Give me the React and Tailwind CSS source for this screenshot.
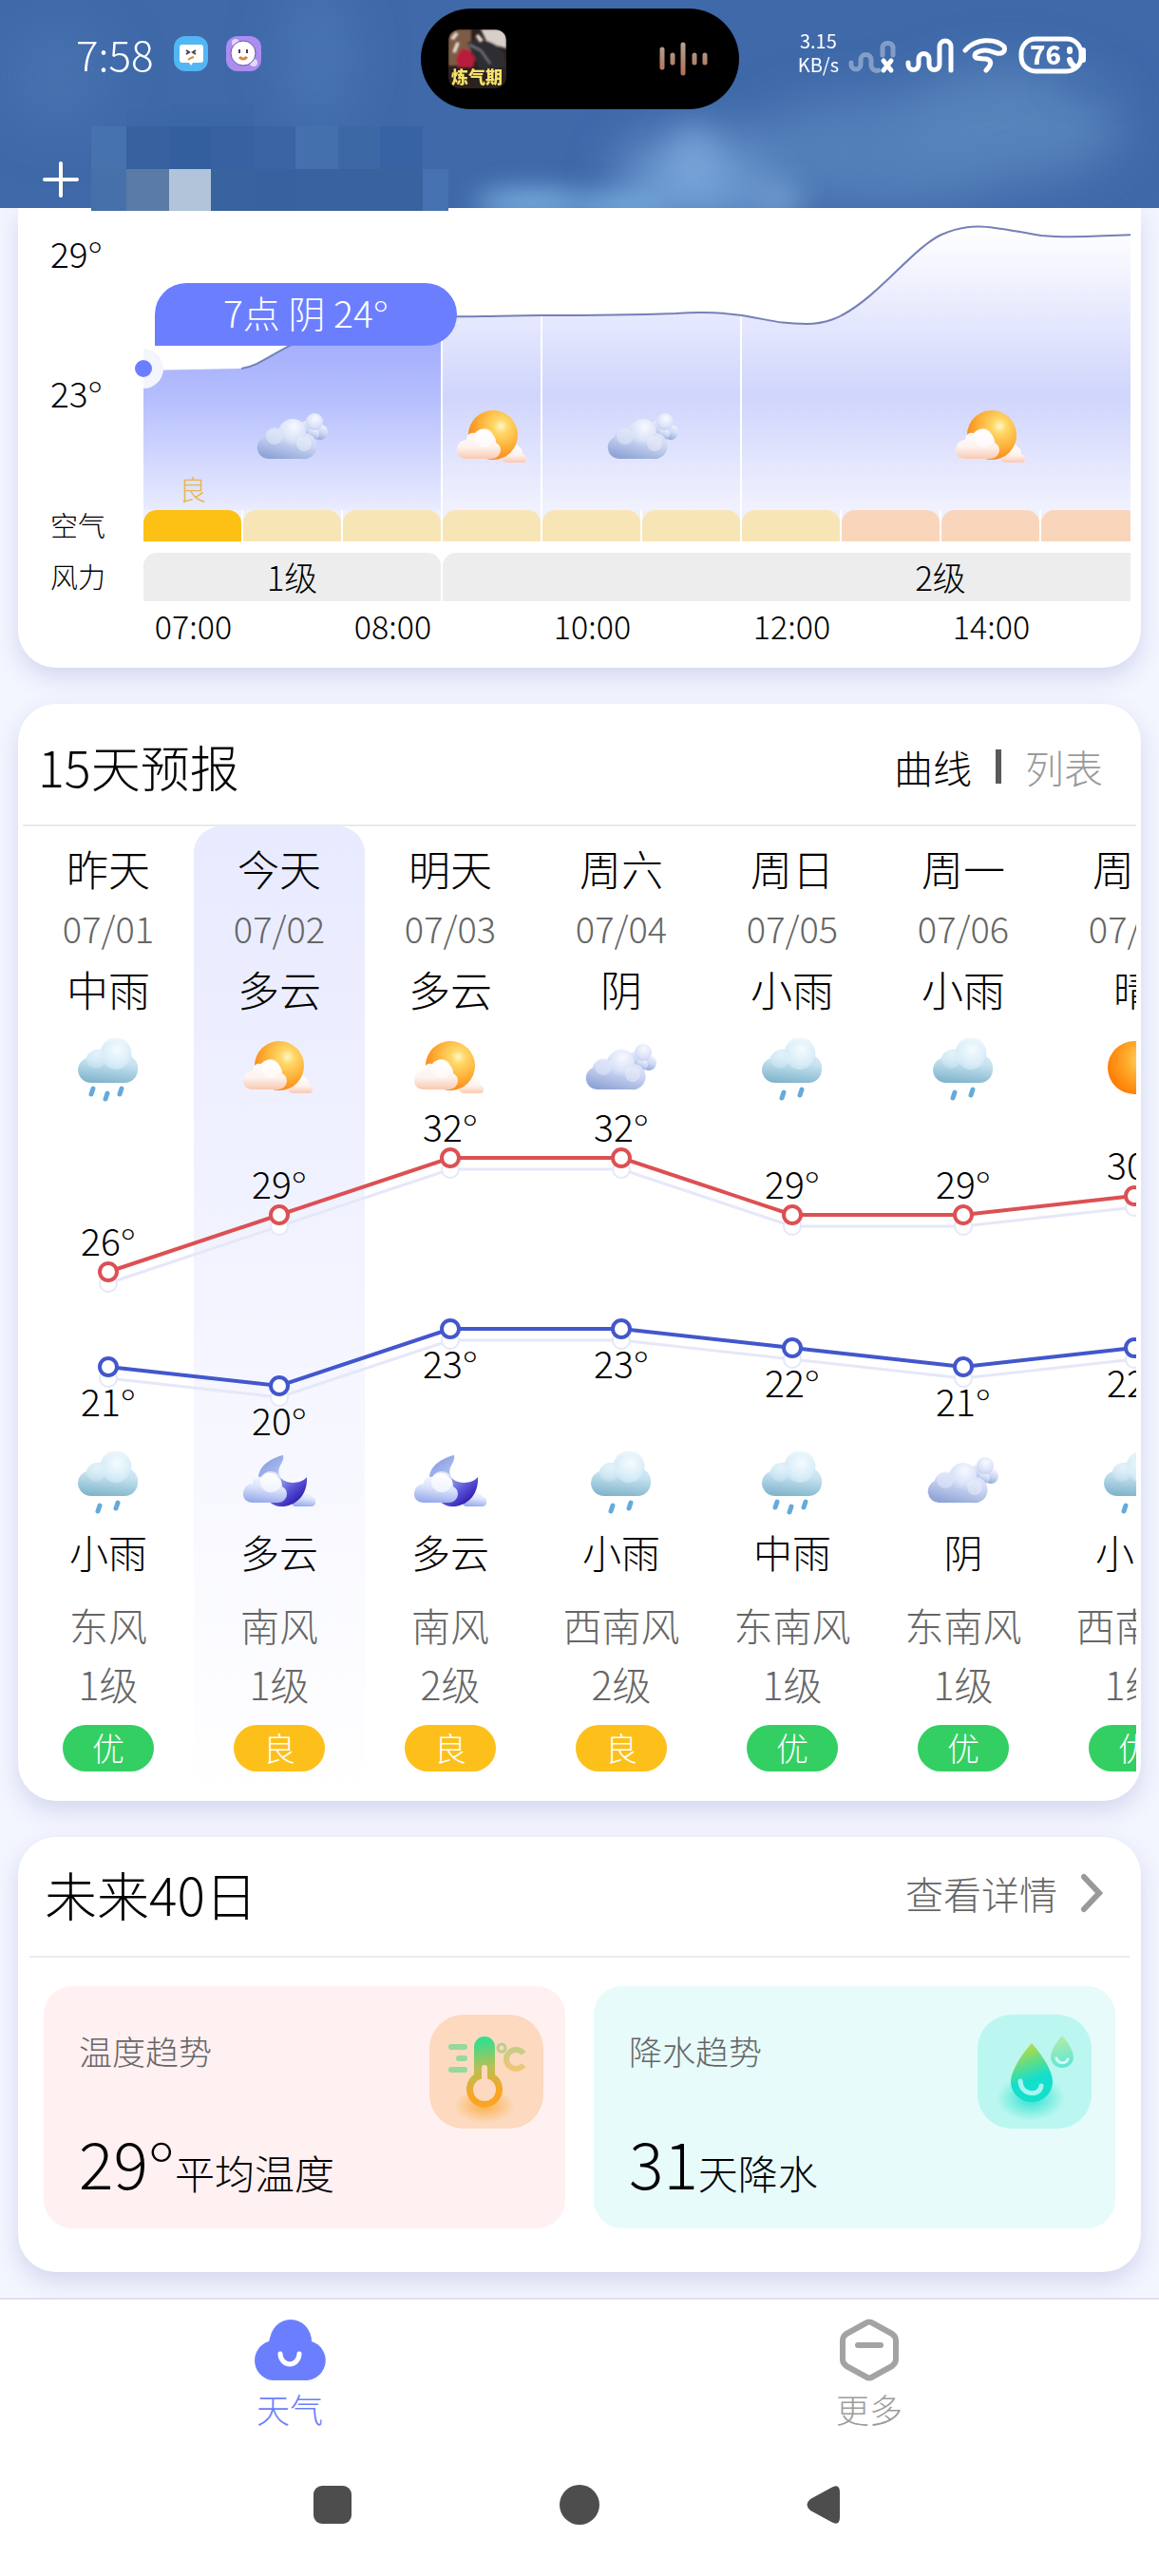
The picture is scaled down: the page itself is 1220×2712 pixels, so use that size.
import React, { useState } from "react";

const FONT = "font-['Noto_Sans_CJK_SC','Noto_Sans',sans-serif]";

/* --------------------------------------
      DATA
-------------------------------------- */
const HOURS = ["07:00", "", "08:00", "", "10:00", "", "12:00", "", "14:00", ""];
const AIR = ["good", "good", "good", "good", "good", "good", "good", "light", "light", "light"];

const DAYS = [
  { day: "昨天", date: "07/01", text: "中雨", icon: "rain3", high: 26, low: 21, nightIcon: "rain2", night: "小雨", wind: "东风", level: "1级", air: "优" },
  { day: "今天", date: "07/02", text: "多云", icon: "cloudy", high: 29, low: 20, nightIcon: "moon", night: "多云", wind: "南风", level: "1级", air: "良" },
  { day: "明天", date: "07/03", text: "多云", icon: "cloudy", high: 32, low: 23, nightIcon: "moon", night: "多云", wind: "南风", level: "2级", air: "良" },
  { day: "周六", date: "07/04", text: "阴", icon: "overcast", high: 32, low: 23, nightIcon: "rain2", night: "小雨", wind: "西南风", level: "2级", air: "良" },
  { day: "周日", date: "07/05", text: "小雨", icon: "rain2", high: 29, low: 22, nightIcon: "rain3", night: "中雨", wind: "东南风", level: "1级", air: "优" },
  { day: "周一", date: "07/06", text: "小雨", icon: "rain2", high: 29, low: 21, nightIcon: "overcast", night: "阴", wind: "东南风", level: "1级", air: "优" },
  { day: "周二", date: "07/07", text: "晴", icon: "sun", high: 30, low: 22, nightIcon: "rain2", night: "小雨", wind: "西南风", level: "1级", air: "优" },
];

/* --------------------------------------
      WEATHER ICONS
-------------------------------------- */
const IconDefs = () => (
  <svg width="0" height="0" className="absolute" aria-hidden="true">
    <defs>
      <radialGradient id="sunFill" cx="0.66" cy="0.32" r="0.75">
        <stop offset="0" stopColor="#fff6c8" />
        <stop offset="0.2" stopColor="#ffd766" />
        <stop offset="0.6" stopColor="#fdae35" />
        <stop offset="1" stopColor="#fb7d12" />
      </radialGradient>
      <radialGradient id="clearFill" cx="0.7" cy="0.35" r="0.75">
        <stop offset="0" stopColor="#ffe07a" />
        <stop offset="0.45" stopColor="#ffad2e" />
        <stop offset="1" stopColor="#ff7a00" />
      </radialGradient>
      <linearGradient id="warmCloud" x1="0" y1="0" x2="0" y2="1">
        <stop offset="0" stopColor="#ffffff" />
        <stop offset="0.6" stopColor="#fdf2ee" />
        <stop offset="1" stopColor="#f9c9b0" />
      </linearGradient>
      <linearGradient id="greyCloud" x1="0.7" y1="0" x2="0.3" y2="1">
        <stop offset="0" stopColor="#f4f6ff" />
        <stop offset="0.5" stopColor="#ccd6f3" />
        <stop offset="1" stopColor="#8ea4d6" />
      </linearGradient>
      <radialGradient id="greyPuff" cx="0.55" cy="0.3" r="0.7">
        <stop offset="0" stopColor="#f7f9ff" />
        <stop offset="0.7" stopColor="#dbe3f8" />
        <stop offset="1" stopColor="#c2cfee" />
      </radialGradient>
      <linearGradient id="rainCloud" x1="0.6" y1="0" x2="0.45" y2="1">
        <stop offset="0" stopColor="#eef8fd" />
        <stop offset="0.55" stopColor="#c6e2f0" />
        <stop offset="1" stopColor="#82b6cd" />
      </linearGradient>
      <radialGradient id="rainPuff" cx="0.55" cy="0.3" r="0.75">
        <stop offset="0" stopColor="#f4fbff" />
        <stop offset="0.7" stopColor="#d8edf7" />
        <stop offset="1" stopColor="#c4e0ee" />
      </radialGradient>
      <linearGradient id="moonFill" x1="18" y1="14" x2="52" y2="56" gradientUnits="userSpaceOnUse">
        <stop offset="0" stopColor="#8f9fe2" />
        <stop offset="0.35" stopColor="#a9bff2" />
        <stop offset="0.75" stopColor="#5a52d6" />
        <stop offset="1" stopColor="#3222b4" />
      </linearGradient>
      <linearGradient id="nightCloud" x1="0.6" y1="0" x2="0.4" y2="1">
        <stop offset="0" stopColor="#ffffff" />
        <stop offset="0.5" stopColor="#dbe3fc" />
        <stop offset="1" stopColor="#98aaea" />
      </linearGradient>
    </defs>
  </svg>
);

const SmallCloud = ({ fill }) => (
  <path
    d="M9 54 a9 9 0 0 1 -9 -10 a10 10 0 0 1 10 -10 a7 7 0 0 1 9 -7 a11 11 0 0 1 18 1 a11 11 0 0 1 4 9 a9 9 0 0 1 5 8 a9 9 0 0 1 -9 9 z"
    fill={fill}
  />
);

const RainCloud = ({ drops }) => (
  <g>
    <path
      d="M20 47 a14 14 0 0 1 -14 -14 a13 13 0 0 1 9 -12 a13 12 0 0 1 15 -9 a16 16 0 0 1 32 7 a15 15 0 0 1 7 14 a14 14 0 0 1 -14 14 z"
      fill="url(#rainCloud)"
    />
    <circle cx="46" cy="18" r="15" fill="url(#rainPuff)" />
    <circle cx="25" cy="22" r="10" fill="url(#rainPuff)" opacity="0.5" />
    {drops.map(([x, y]) => (
      <path
        key={x}
        d={`M${x + 2} ${y} L${x} ${y + 6}`}
        stroke="#66aadb"
        strokeWidth="5"
        strokeLinecap="round"
      />
    ))}
  </g>
);

const WeatherIcon = ({ name, ...rest }) => (
  <svg width="76" height="68" viewBox="0 0 76 68" fill="none" aria-hidden="true" {...rest}>
    {name === "cloudy" && (
      <g>
        <path d="M52 58 a7 7 0 0 1 -2 -13 a9 9 0 0 1 16 -3 a7 7 0 0 1 3 7 a5 5 0 0 1 2 9 z" fill="url(#warmCloud)" />
        <circle cx="38" cy="29" r="26" fill="url(#sunFill)" />
        <SmallCloud fill="url(#warmCloud)" />
        <circle cx="29" cy="32" r="10" fill="#ffffff" opacity="0.55" />
      </g>
    )}
    {name === "overcast" && (
      <g>
        <circle cx="53" cy="23" r="9" fill="url(#greyCloud)" />
        <circle cx="67" cy="26" r="8" fill="url(#greyCloud)" />
        <circle cx="60" cy="28" r="6" fill="url(#greyCloud)" />
        <circle cx="61" cy="15" r="9" fill="url(#greyPuff)" />
        <path d="M12 54 a12 12 0 0 1 -4 -23 a11 11 0 0 1 15 -8 a15 15 0 0 1 29 4 a13 13 0 0 1 -4 27 z" fill="url(#greyCloud)" />
        <circle cx="38" cy="26" r="14" fill="url(#greyPuff)" />
        <circle cx="19" cy="30" r="9" fill="#e4eafa" opacity="0.55" />
        <circle cx="50" cy="38" r="8" fill="#f2f4fb" opacity="0.45" />
      </g>
    )}
    {name === "rain2" && <RainCloud drops={[[27, 57], [46, 54]]} />}
    {name === "rain3" && <RainCloud drops={[[20, 53], [35, 58], [50, 53]]} />}
    {name === "moon" && (
      <g>
        <path d="M54 58 a6 6 0 0 1 0 -11 a7 7 0 0 1 13 -3 a6 6 0 0 1 5 4 a5 5 0 0 1 -1 10 z" fill="url(#nightCloud)" />
        <path d="M42 4 C30 7 14 15 16 32 C19 50 31 59 43 58 C58 56 68 44 67 27 C62 33 53 34 46 32 C36 29 36 20 39 15 C41 11 43 8 42 4 z" fill="url(#moonFill)" />
        <SmallCloud fill="url(#nightCloud)" />
        <circle cx="29" cy="32" r="11" fill="#ffffff" opacity="0.65" />
      </g>
    )}
    {name === "sun" && <circle cx="38" cy="31" r="28" fill="url(#clearFill)" />}
  </svg>
);

/* --------------------------------------
      HEADER
-------------------------------------- */
const Sky = () => (
  <svg
    className="absolute inset-0 h-full w-full"
    viewBox="0 0 1220 219"
    preserveAspectRatio="none"
    aria-hidden="true"
  >
    <defs>
      <filter id="haze" x="-60%" y="-60%" width="220%" height="220%">
        <feGaussianBlur stdDeviation="26" />
      </filter>
      <filter id="wisp" x="-60%" y="-60%" width="220%" height="220%">
        <feGaussianBlur stdDeviation="14" />
      </filter>
    </defs>
    <rect width="1220" height="219" fill="#3f69a9" />
    <g filter="url(#haze)">
      <ellipse cx="60" cy="80" rx="60" ry="60" fill="#4873b0" opacity="0.7" />
      <ellipse cx="335" cy="60" rx="40" ry="80" fill="#4a76b3" opacity="0.8" />
      <ellipse cx="740" cy="190" rx="90" ry="50" fill="#6f9dd3" />
      <ellipse cx="930" cy="160" rx="150" ry="60" fill="#5380b9" />
      <ellipse cx="1060" cy="130" rx="120" ry="60" fill="#5683bb" />
    </g>
    <g filter="url(#wisp)">
      <ellipse cx="560" cy="214" rx="60" ry="14" fill="#7fb4e4" />
      <ellipse cx="650" cy="217" rx="56" ry="12" fill="#7fb4e4" />
      <ellipse cx="730" cy="170" rx="26" ry="36" fill="#7ca7da" opacity="0.6" />
      <ellipse cx="820" cy="212" rx="26" ry="20" fill="#7da9da" opacity="0.6" />
      <ellipse cx="1150" cy="90" rx="40" ry="14" fill="#406caa" opacity="0.6" />
    </g>
  </svg>
);

const BLOCKS = [
  [96, 133, 37, "#4672ae"], [133, 133, 45, "#37629f"], [178, 133, 44, "#345f9e"], [222, 133, 45, "#3761a0"],
  [267, 133, 44, "#3a64a3"], [311, 133, 45, "#4470ae"], [356, 133, 44, "#3c68a6"], [400, 133, 45, "#3762a3"],
  [96, 178, 37, "#4570aa"], [133, 178, 45, "#5a7ba5"], [178, 178, 44, "#b2c4d9"], [222, 178, 45, "#38639f"],
  [267, 178, 44, "#38629f"], [311, 178, 134, "#39639f"], [445, 178, 27, "#4772b1"],
  [133, 115, 45, "#3b67a5"], [178, 110, 90, "#3965a3"], [311, 110, 45, "#416dab"],
];

const CityMosaic = () => (
  <svg className="absolute left-0 top-0" width="480" height="222" aria-hidden="true">
    {BLOCKS.map(([x, y, w, color]) => (
      <rect key={`${x}-${y}`} x={x} y={y} width={w} height={y < 130 ? 133 - y : 45} fill={color} opacity={y < 130 ? 0.5 : 1} />
    ))}
  </svg>
);

const StatusIcons = () => (
  <svg width="254" height="42" viewBox="891 35 254 42" fill="none" stroke="#ffffff" strokeLinecap="round" strokeLinejoin="round" aria-hidden="true">
    <path d="M896 64 v2 a5 5 0 0 0 10 0 v-5 a5 5 0 0 1 11 0 v5 a6 6 0 0 0 8 6 M929 56 V47 a6 6 0 0 1 11 0 V56" strokeWidth="5" opacity="0.35" />
    <path d="M930 62 l8 10 M938 62 l-8 10" strokeWidth="5" />
    <path d="M956 64 v2 a5.500 5.500 0 0 0 11 0 v-6 a5.500 5.500 0 0 1 11 0 v6 a5.500 5.500 0 0 0 11 0 V47 a6 6 0 0 1 12 0 V72" strokeWidth="5" />
    <path d="M1016 51 C1027 38 1048 38 1057 47 C1059 53 1054 55 1049 54 C1041 51 1034 49 1027 54 C1023 61 1032 59 1038 60 C1046 62 1042 68 1038 72" strokeWidth="5" />
    <rect x="1075" y="39" width="63" height="34" rx="15" strokeWidth="5" />
    <path d="M1140 51 v10" strokeWidth="6" />
    <path d="M1126 50 v2 M1126 61 q1 4 4 6" strokeWidth="6" />
    <text x="1084" y="66" fill="#ffffff" stroke="none" fontSize="27" fontWeight="900">76</text>
  </svg>
);

const Header = () => (
  <header className="relative z-10 h-[219px] shrink-0 text-white">
    <Sky />
    <CityMosaic />
    <div className="relative grid h-[115px] grid-cols-[1fr_335px_1fr] pt-[9px]">
      <div className="flex items-center pb-[12px] pl-[80px]">
        <span className="w-[103px] text-[44px] leading-[42px]">7:58</span>
        <svg width="92" height="38" viewBox="183 37 92 38" aria-hidden="true">
          <rect x="183" y="38" width="36" height="37" rx="12" fill="#53b6f4" />
          <path d="M192 47 h19 a3 3 0 0 1 3 3 v13 a3 3 0 0 1 -3 3 h-8 l-2 3 l-2 -3 h-7 a3 3 0 0 1 -3 -3 v-13 a3 3 0 0 1 3 -3 z" fill="#ffffff" />
          <path d="M196 53 l3 2 l-3 2 M206 53 l-3 2 l3 2" stroke="#444" strokeWidth="2" fill="none" />
          <path d="M198 63 l3 -2 l3 -1" stroke="#d98a3a" strokeWidth="2" fill="none" />
          <rect x="238" y="38" width="37" height="37" rx="12" fill="#ab8df0" />
          <circle cx="248" cy="45" r="4" fill="#e4d7fb" />
          <circle cx="267" cy="66" r="4" fill="#e4d7fb" />
          <circle cx="256" cy="56" r="13" fill="#ffffff" stroke="#6d55a8" strokeWidth="1" />
          <path d="M252 52 v4 M260 52 v4" stroke="#4a3b6b" strokeWidth="2" />
          <path d="M252 60 q4 4 8 0" stroke="#d98a3a" strokeWidth="3" fill="none" />
        </svg>
      </div>
      <div className="flex items-center justify-between rounded-full bg-black pl-[29px] pr-[33px]">
        <svg width="61" height="62" viewBox="0 0 61 62" aria-hidden="true">
          <defs>
            <clipPath id="coverClip"><rect width="61" height="62" rx="12" /></clipPath>
            <filter id="coverSoft"><feGaussianBlur stdDeviation="1" /></filter>
          </defs>
          <g clipPath="url(#coverClip)">
            <rect width="61" height="62" fill="#2b211f" />
            <g filter="url(#coverSoft)">
              <rect width="24" height="38" fill="#7d5c45" />
              <path d="M34 0 h27 v20 l-20 -6 z" fill="#d8cfc8" />
              <path d="M20 14 q20 -10 38 10 l3 16 l-28 2 z" fill="#2e2d31" />
              <path d="M4 10 l5 -6 M6 24 l4 -10" stroke="#efe3d6" strokeWidth="3" />
              <path d="M8 30 l6 -10 l8 2 l6 8 l-2 10 l-16 0 z" fill="#b81f3d" />
              <path d="M22 16 l12 6 l10 14" stroke="#73777f" strokeWidth="2" fill="none" />
              <path d="M30 6 l5 6" stroke="#f0d9c8" strokeWidth="4" />
            </g>
          </g>
          <text x="30" y="57" textAnchor="middle" fontSize="18" fontWeight="900" fill="#f4e36a">炼气期</text>
        </svg>
        <svg width="51" height="38" viewBox="0 0 51 38" strokeWidth="5" strokeLinecap="round" aria-hidden="true">
          <defs>
            <linearGradient id="waveFill" x1="0" y1="0" x2="0" y2="38" gradientUnits="userSpaceOnUse">
              <stop offset="0" stopColor="#b3a79b" />
              <stop offset="1" stopColor="#b06c4c" />
            </linearGradient>
          </defs>
          <path d="M3 9 V28 M14 15 V23 M25 4 V34 M37 15 V23 M48 15 V23" stroke="url(#waveFill)" />
        </svg>
      </div>
      <div className="flex items-center justify-end gap-[8px] pb-[8px] pr-[75px]">
        <div className="pb-[7px] text-center text-[20px] leading-[25px] font-normal">
          <div>3.15</div>
          <div>KB/s</div>
        </div>
        <StatusIcons />
      </div>
    </div>
    <button type="button" aria-label="添加城市" className="relative ml-[45px] mt-[55px] block">
      <svg width="38" height="38" stroke="#ffffff" strokeWidth="4" strokeLinecap="round" aria-hidden="true">
        <path d="M19 2 V36 M2 19 H36" />
      </svg>
    </button>
  </header>
);

/* --------------------------------------
      HOURLY CARD
-------------------------------------- */
const Degree = () => <span className="font-['Lato',sans-serif]">°</span>;

const CURVE =
  "C140 164 160 114 315 114 C350 115 380 113 420 113 C500 113 530 112 560 111 C590 109 610 110 630 113 C660 118 670 122 698 122 C720 122 735 113 735 113 C775 92 810 42 840 28 C875 12 900 22 945 29 C985 33 1010 28 1050 28";

const HourlyChart = () => (
  <svg width="1050" height="318" viewBox="0 0 1050 318" fill="none" aria-hidden="true">
    <defs>
      <linearGradient id="areaNow" x1="0" y1="114" x2="0" y2="351" gradientUnits="userSpaceOnUse">
        <stop offset="0" stopColor="#9ca8fd" />
        <stop offset="0.35" stopColor="#b4bdfd" />
        <stop offset="1" stopColor="#f8f8ff" />
      </linearGradient>
      <linearGradient id="areaRest" x1="0" y1="20" x2="0" y2="351" gradientUnits="userSpaceOnUse">
        <stop offset="0" stopColor="#ffffff" />
        <stop offset="0.54" stopColor="#d0d5fc" />
        <stop offset="1" stopColor="#fafaff" />
      </linearGradient>
      <clipPath id="nowClip"><rect width="315" height="318" /></clipPath>
      <clipPath id="restClip"><rect x="315" width="735" height="318" /></clipPath>
    </defs>
    <path d={`M0 171 L103 169 ${CURVE} V318 H0 z`} fill="url(#areaNow)" clipPath="url(#nowClip)" />
    <path d={`M0 171 L103 169 ${CURVE} V318 H0 z`} fill="url(#areaRest)" clipPath="url(#restClip)" />
    <path d={`M103 169 ${CURVE}`} stroke="#7580b8" strokeWidth="2" />
    <path d="M314 118 V318 M419 114 V318 M629 114 V318" stroke="#ffffff" strokeWidth="2" />
    <path d="M0 148 a21 21 0 0 1 0 42 z" fill="#f4f6ff" />
    <WeatherIcon name="overcast" x="119" y="210" />
    <WeatherIcon name="cloudy" x="330" y="210" />
    <WeatherIcon name="overcast" x="488" y="210" />
    <WeatherIcon name="cloudy" x="855" y="210" />
  </svg>
);

const HourlyCard = () => (
  <section className="flex rounded-b-[40px] bg-white pb-4 pr-[11px] shadow-[0_10px_24px_rgba(90,90,170,0.2)]">
    <div className="w-[132px] shrink-0 pl-[34px] pt-[22px]">
      <div className="h-[50px] text-[37px] leading-[50px]">29<Degree /></div>
      <div className="mt-[97px] h-[50px] text-[37px] leading-[50px]">23<Degree /></div>
      <div className="mt-[98px] text-[29px] leading-[33px]">空气</div>
      <div className="mt-3 text-[29px] leading-[51px]">风力</div>
    </div>
    <div className="relative min-w-0 flex-1">
      <div className="overflow-hidden">
        <div className="w-[1050px]">
          <HourlyChart />
          <div className="grid grid-cols-10 bg-[#f0f0fd]">
            {AIR.map((level, i) => (
              <div key={i} className="h-[33px] border-r-2 border-white">
                <div
                  className={
                    i === 0
                      ? "h-full rounded-t-[14px] bg-[#fdc015]"
                      : level === "good"
                        ? "h-full rounded-t-[14px] bg-[#f8e5b6]"
                        : "h-full rounded-t-[14px] bg-[#f9d6bb]"
                  }
                />
              </div>
            ))}
          </div>
        </div>
        <div className="mt-3 grid w-[1363px] grid-cols-[313px_1048px] gap-[2px] text-center text-[35px] leading-[49px]">
          <div className="h-[51px] rounded-t-[14px] bg-[#ededed]">1级</div>
          <div className="h-[51px] rounded-t-[14px] bg-[#ededed]">2级</div>
        </div>
        <div className="grid h-[54px] w-[1050px] grid-cols-10 text-center text-[34px] leading-[51px]">
          {HOURS.map((h, i) => (
            <div key={i}>{h}</div>
          ))}
        </div>
      </div>
      {/* selected hour */}
      <div className="absolute left-[12px] top-[79px] h-[66px] w-[318px] rounded-[33px] rounded-bl-none bg-[#6b7ffe] text-center text-[39px] leading-[60px] text-white">
        7点 阴 24<Degree />
      </div>
      <div className="absolute left-[-9px] top-[160px] size-[18px] rounded-full bg-[#6b7ffe]" />
      <div className="absolute left-0 top-[278px] w-[104px] text-center text-[29px] leading-[34px] text-[#e8b64a]">良</div>
    </div>
  </section>
);

/* --------------------------------------
      15 DAY FORECAST
-------------------------------------- */
const xAt = (i) => 90 + i * 180;
const highY = (t) => 58 + (32 - t) * 20;
const lowY = (t) => 238 + (23 - t) * 20;

const TempLine = ({ values, color, yOf }) => {
  const points = values.map((v, i) => `${xAt(i)},${yOf(v)}`).join(" ");
  return (
    <g>
      <g transform="translate(0 12)">
        <polyline points={points} stroke="#e6e7f8" strokeWidth="3" />
        {values.map((v, i) => (
          <circle key={i} cx={xAt(i)} cy={yOf(v)} r="9" fill="#ffffff" stroke="#e6e7f8" strokeWidth="2" />
        ))}
      </g>
      <polyline points={points} stroke={color} strokeWidth="4" />
      {values.map((v, i) => (
        <circle key={i} cx={xAt(i)} cy={yOf(v)} r="9" fill="#ffffff" stroke={color} strokeWidth="4" />
      ))}
    </g>
  );
};

const TempLabel = ({ x, y, value }) => (
  <text x={x} y={y}>
    {value}
    <tspan className="font-['Lato',sans-serif]">°</tspan>
  </text>
);

const TempChart = () => (
  <svg className="absolute left-0 top-[291px]" width="1260" height="367" fill="none" aria-hidden="true">
    <TempLine values={DAYS.map((d) => d.high)} color="#dc5053" yOf={highY} />
    <TempLine values={DAYS.map((d) => d.low)} color="#4257cc" yOf={lowY} />
    <g fill="#000000" fontSize="39" textAnchor="middle">
      {DAYS.map((d, i) => (
        <g key={d.date}>
          <TempLabel x={xAt(i)} y={highY(d.high) - 17} value={d.high} />
          <TempLabel x={xAt(i)} y={lowY(d.low) + 52} value={d.low} />
        </g>
      ))}
    </g>
  </svg>
);

const DayColumn = ({ item, today }) => (
  <div
    className={
      today
        ? "flex flex-col items-center rounded-t-[28px] bg-linear-to-b from-[#e8eaff] to-white pb-[31px] pt-[14px]"
        : "flex flex-col items-center pb-[31px] pt-[14px]"
    }
  >
    <div className="text-[44px] leading-[60px]">{item.day}</div>
    <div className="text-[38px] leading-[66px] text-[#666]">{item.date}</div>
    <div className="text-[44px] leading-[62px]">{item.text}</div>
    <WeatherIcon name={item.icon} className="mt-[21px]" />
    <WeatherIcon name={item.nightIcon} className="mt-[367px]" />
    <div className="mt-[7px] text-[41px] leading-[60px]">{item.night}</div>
    <div className="mt-[17px] text-[41px] leading-[60px] text-[#666]">{item.wind}</div>
    <div className="text-[41px] leading-[64px] text-[#666]">{item.level}</div>
    <div
      className={
        item.air === "优"
          ? "mt-3 h-[49px] w-[96px] rounded-full bg-[#33cf63] text-center text-[34px] leading-[47px] text-white"
          : "mt-3 h-[49px] w-[96px] rounded-full bg-[#fdc01b] text-center text-[34px] leading-[47px] text-white"
      }
    >
      {item.air}
    </div>
  </div>
);

const ForecastCard = () => {
  const [view, setView] = useState("curve");

  return (
    <section className="rounded-[40px] bg-white px-[5px] shadow-[0_10px_24px_rgba(90,90,170,0.2)]">
      <div className="flex h-[129px] items-center justify-between border-b-2 border-[#ebebeb] pl-[16px] pr-[35px] pt-1">
        <h2 className="text-[52px] leading-[60px]">15天预报</h2>
        <div className="flex items-center gap-[25px] text-[41px] leading-[60px]">
          <button type="button" className={view === "curve" ? "text-black" : "text-[#9a9a9a]"} onClick={() => setView("curve")}>
            曲线
          </button>
          <span className="h-9 w-[6px] bg-[#595959]" />
          <button type="button" className={view === "list" ? "text-black" : "text-[#9a9a9a]"} onClick={() => setView("list")}>
            列表
          </button>
        </div>
      </div>
      <div className="relative overflow-hidden">
        <div className="grid w-[1260px] grid-cols-7">
          {DAYS.map((d, i) => (
            <DayColumn key={d.date} item={d} today={i === 1} />
          ))}
        </div>
        <TempChart />
      </div>
    </section>
  );
};

/* --------------------------------------
      40 DAY TREND
-------------------------------------- */
const ThermometerIcon = () => (
  <svg width="120" height="120" viewBox="0 0 120 120" fill="none" aria-hidden="true">
    <defs>
      <linearGradient id="thermo" x1="50" y1="22" x2="66" y2="98" gradientUnits="userSpaceOnUse">
        <stop offset="0.1" stopColor="#3bdc8c" />
        <stop offset="0.45" stopColor="#b8c052" />
        <stop offset="0.8" stopColor="#fba424" />
      </linearGradient>
      <radialGradient id="thermoGlow">
        <stop offset="0" stopColor="#fba62c" stopOpacity="0.8" />
        <stop offset="1" stopColor="#fba62c" stopOpacity="0" />
      </radialGradient>
      <linearGradient id="celsius" x1="0" y1="30" x2="0" y2="60" gradientUnits="userSpaceOnUse">
        <stop offset="0" stopColor="#b9cf8c" />
        <stop offset="1" stopColor="#f5c573" />
      </linearGradient>
    </defs>
    <rect width="120" height="120" rx="36" fill="#fcd9bf" />
    <ellipse cx="58" cy="96" rx="32" ry="18" fill="url(#thermoGlow)" />
    <path d="M23 34 H37 M31 46 H37 M23 58 H37" stroke="#93d9a0" strokeWidth="6" strokeLinecap="round" />
    <path d="M47 34 a11 11 0 0 1 22 0 V63 a19 19 0 1 1 -22 0 z" fill="url(#thermo)" />
    <path d="M58 56 V72" stroke="#fcd9bf" strokeWidth="6" strokeLinecap="round" />
    <circle cx="58" cy="79" r="12" fill="#fcd9bf" />
    <circle cx="76" cy="35" r="4" stroke="#b9cf8c" strokeWidth="3" />
    <path d="M99 41 A10 10 0 1 0 99 53" stroke="url(#celsius)" strokeWidth="6" />
  </svg>
);

const DropIcon = () => (
  <svg width="120" height="120" viewBox="0 0 120 120" fill="none" aria-hidden="true">
    <defs>
      <linearGradient id="dropBig" x1="45" y1="32" x2="62" y2="80" gradientUnits="userSpaceOnUse">
        <stop offset="0" stopColor="#c3dc3c" />
        <stop offset="0.35" stopColor="#6fdc7c" />
        <stop offset="0.75" stopColor="#13dfcb" />
      </linearGradient>
      <linearGradient id="dropSmall" x1="84" y1="22" x2="92" y2="56" gradientUnits="userSpaceOnUse">
        <stop offset="0" stopColor="#b5eca4" />
        <stop offset="1" stopColor="#5fe6d8" />
      </linearGradient>
      <radialGradient id="dropGlow">
        <stop offset="0" stopColor="#1fdfcd" stopOpacity="0.9" />
        <stop offset="1" stopColor="#1fdfcd" stopOpacity="0" />
      </radialGradient>
    </defs>
    <rect width="120" height="120" rx="36" fill="#bbf7f0" />
    <ellipse cx="56" cy="88" rx="36" ry="24" fill="url(#dropGlow)" />
    <path d="M57 30 C64 38 79 57 79 71 a22 21 0 0 1 -44 0 C35 57 50 38 57 30 z" fill="url(#dropBig)" />
    <path d="M45 70 C46 86 66 86 67 75" stroke="#a5f6f0" strokeWidth="5" strokeLinecap="round" />
    <path d="M89 22 C94 28 101 37 101 45 a12 11 0 0 1 -24 0 C77 37 84 28 89 22 z" fill="url(#dropSmall)" />
    <path d="M83 46 C85 52 93 52 95 47" stroke="#d3fbf5" strokeWidth="3" strokeLinecap="round" />
  </svg>
);

const TrendTile = ({ className, label, value, unit, icon }) => (
  <div className={className}>
    <div className="pt-[20px]">
      <div className="text-[35px] leading-[50px] text-[#666]">{label}</div>
      <div className="mt-[52px] flex items-baseline">
        <span className="text-[68px] leading-[80px]">{value}</span>
        <span className="text-[42px] leading-[60px]">{unit}</span>
      </div>
    </div>
    {icon}
  </div>
);

const FutureCard = () => (
  <section className="rounded-[40px] bg-white px-3 pb-[46px] shadow-[0_10px_24px_rgba(90,90,170,0.2)]">
    <div className="flex h-[127px] items-center justify-between border-b-2 border-[#ebebeb] pb-2 pl-[16px] pr-[28px]">
      <h2 className="text-[55px] leading-[60px]">未来40日</h2>
      <a href="#future" className="flex items-center gap-6 text-[40px] leading-[60px] text-[#666]">
        查看详情
        <svg width="24" height="42" fill="none" stroke="#999999" strokeWidth="6" strokeLinecap="round" aria-hidden="true">
          <path d="M4 4 L20 21 L4 38" />
        </svg>
      </a>
    </div>
    <div className="grid grid-cols-2 gap-[30px] px-[15px] pt-[30px]">
      <TrendTile
        className="flex h-[255px] items-start justify-between rounded-[30px] bg-[#fff0f2] pl-[37px] pr-[23px] pt-[23px]"
        label="温度趋势"
        value={<>29<Degree /></>}
        unit="平均温度"
        icon={<div className="pt-[7px]"><ThermometerIcon /></div>}
      />
      <TrendTile
        className="flex h-[255px] items-start justify-between rounded-[30px] bg-[#e6fbfa] pl-[37px] pr-[25px] pt-[23px]"
        label="降水趋势"
        value="31"
        unit="天降水"
        icon={<div className="pt-[7px]"><DropIcon /></div>}
      />
    </div>
  </section>
);

/* --------------------------------------
      BOTTOM BARS
-------------------------------------- */
const TabBar = () => (
  <nav className="grid h-[150px] shrink-0 grid-cols-2 border-t-2 border-[#dfe0ee] bg-white text-[35px] leading-[44px]">
    <a href="#weather" className="flex flex-col items-center pt-5 text-[#6b7ffe]">
      <svg width="78" height="66" viewBox="0 0 78 66" aria-hidden="true">
        <path d="M21 65 a21 21 0 0 1 -4 -41 a23 22 0 0 1 45 0 a21 21 0 0 1 -5 41 z" fill="#6b7ffe" />
        <path d="M18 24 a22 23 0 0 1 44 0 l-4 12 h-36 z" fill="#6b7ffe" />
        <path d="M29 37 a10 11 0 0 0 20 0" fill="none" stroke="#ffffff" strokeWidth="5" strokeLinecap="round" />
      </svg>
      <span className="mt-[7px]">天气</span>
    </a>
    <a href="#more" className="flex flex-col items-center pt-5 text-[#9c9c9c]">
      <svg width="64" height="66" viewBox="0 0 64 66" fill="none" stroke="#a3a3a3" strokeWidth="6" strokeLinejoin="round" strokeLinecap="round" aria-hidden="true">
        <path d="M28 5 Q32 2 36 5 L56 16 Q60 19 60 23 V43 Q60 47 56 50 L36 61 Q32 64 28 61 L8 50 Q4 47 4 43 V23 Q4 19 8 16 z" />
        <path d="M20 28 H44" />
      </svg>
      <span className="mt-[7px]">更多</span>
    </a>
  </nav>
);

const SystemBar = () => (
  <div className="flex h-[143px] shrink-0 items-start justify-center gap-[218px] bg-white pt-[47px]">
    <button type="button" aria-label="最近任务">
      <svg width="42" height="42" aria-hidden="true"><rect x="1" y="1" width="40" height="40" rx="9" fill="#4d4d4d" /></svg>
    </button>
    <button type="button" aria-label="主屏幕">
      <svg width="42" height="42" aria-hidden="true"><circle cx="21" cy="21" r="21" fill="#4d4d4d" /></svg>
    </button>
    <button type="button" aria-label="返回">
      <svg width="42" height="42" aria-hidden="true">
        <path d="M26 3 Q35 -2 35 8 V34 Q35 44 26 39 L4 27 Q-3 21 4 15 z" fill="#4d4d4d" />
      </svg>
    </button>
  </div>
);

export default function App() {
  return (
    <div className={`${FONT} flex min-h-screen flex-col bg-[#f3f6ff] font-light text-black`}>
      <IconDefs />
      <Header />
      <main className="flex flex-1 flex-col gap-[38px] px-[19px] pb-[27px]">
        <HourlyCard />
        <ForecastCard />
        <FutureCard />
      </main>
      <TabBar />
      <SystemBar />
    </div>
  );
}
